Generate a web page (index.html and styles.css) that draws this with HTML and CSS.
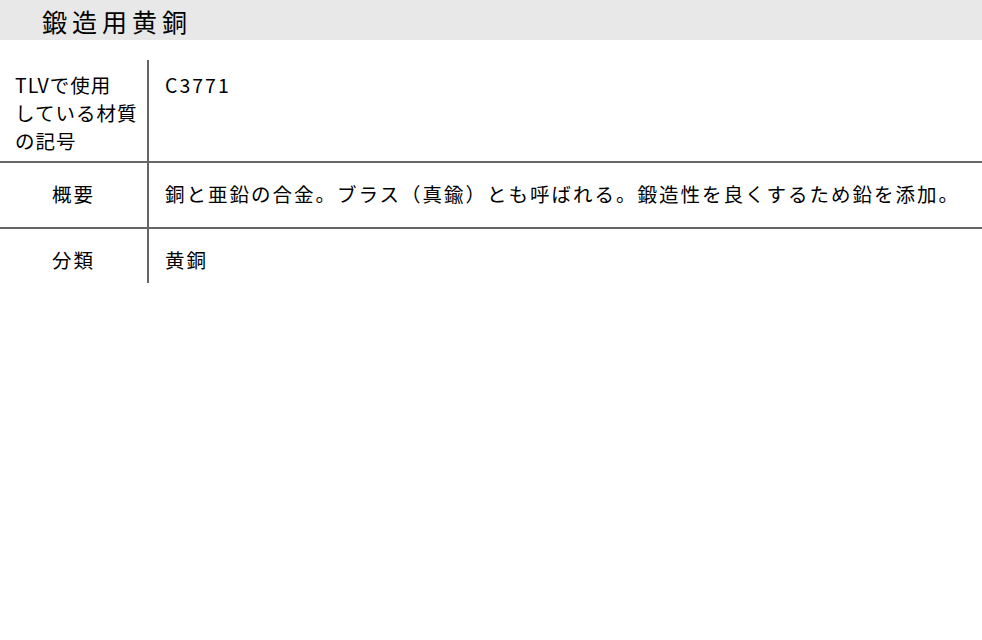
FILE: index.html
```html
<!doctype html>
<html>
<head>
<meta charset="UTF-8">
<title>鍛造用黄銅</title>
<link rel="stylesheet" href="styles.css">
</head>
<body>
<h1 class="title">鍛造用黄銅</h1>

<div class="spec">
  <div class="row first">
    <div class="label left">TLVで使用<br>している材質<br>の記号</div>
    <div class="value">C3771</div>
  </div>
  <div class="row mid">
    <div class="label">概要</div>
    <div class="value">銅と亜鉛の合金。ブラス（真鍮）とも呼ばれる。鍛造性を良くするため鉛を添加。</div>
  </div>
  <div class="row last">
    <div class="label">分類</div>
    <div class="value">黄銅</div>
  </div>
</div>
</body>
</html>
```

FILE: styles.css
```css
body { margin: 0; background: #fff; color: #000; font-family: "Noto Sans CJK JP", "Noto Sans", sans-serif; }
.title { margin: 0; height: 40px; padding-left: 42px; background-color: #e8e8e8; font-size: 25px; font-weight: normal; line-height: 42px; letter-spacing: 5px; }
.spec { margin-top: 20px; font-size: 19.5px; line-height: 26px; letter-spacing: 2px; }
.row { display: flex; border-bottom: 2px solid #666; }
.row.last { border-bottom: none; }
.label { width: 117px; flex: none; padding: 0 15px; border-right: 2px solid #666; text-align: center; white-space: nowrap; }
.label.left { text-align: left; letter-spacing: 1px; }
.value { flex: 1; padding-left: 16px; }
.row.first .label { padding-top: 11px; padding-bottom: 6px; line-height: 28px; }
.row.first .value { padding-top: 12px; padding-bottom: 11px; }
.row.mid .label, .row.mid .value { padding-top: 18px; padding-bottom: 20px; }
.row.last .label, .row.last .value { padding-top: 18px; padding-bottom: 10px; }
```
